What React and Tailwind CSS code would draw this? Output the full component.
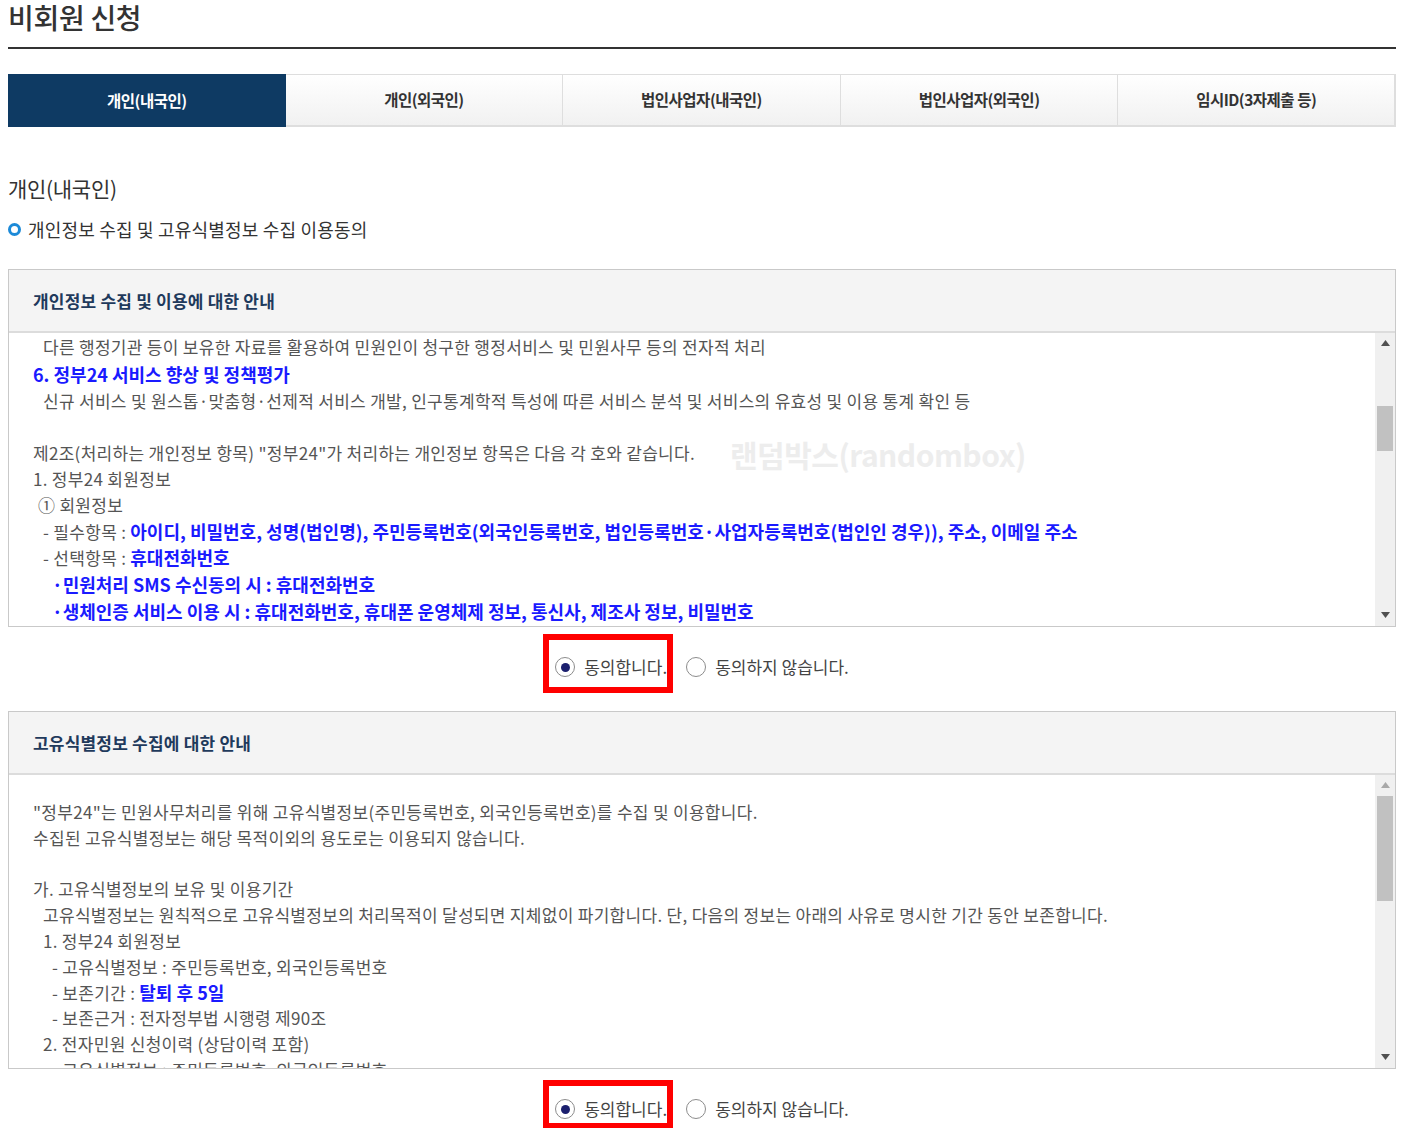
import React from "react";

const FONT = "font-['Noto_Sans_CJK_KR','Noto_Sans',sans-serif]";

function Radio({ checked }) {
  return (
    <span className="w-[20px] h-[20px] rounded-full border border-[#8c8c8c] bg-white flex items-center justify-center shrink-0">
      {checked && <span className="w-[9px] h-[9px] rounded-full bg-[#1b1f6e]" />}
    </span>
  );
}

function AgreeRow({ boxClass }) {
  return (
    <div className="h-[84px] flex justify-center items-start pt-[30px]">
      <div className="relative flex items-center gap-[9px] h-[20px]">
        <span className={"absolute border-[6px] border-[#ff0000] " + boxClass} />
        <Radio checked />
        <span className="text-[17px] leading-[20px] text-[#444]">동의합니다.</span>
      </div>
      <div className="flex items-center gap-[9px] h-[20px] ml-[19px]">
        <Radio />
        <span className="text-[17px] leading-[20px] text-[#444]">동의하지 않습니다.</span>
      </div>
    </div>
  );
}

function Arrow({ up, light }) {
  return (
    <svg width="9" height="6" viewBox="0 0 9 6">
      <polygon
        points={up ? "4.5,0 9,6 0,6" : "0,0 9,0 4.5,6"}
        fill={light ? "#a8a8a8" : "#505050"}
      />
    </svg>
  );
}

function Scrollbar({ thumbClass, upLight }) {
  return (
    <div className="w-[20px] shrink-0 bg-[#f0f0f0] flex flex-col items-center">
      <div className="h-[20px] w-full flex items-center justify-center">
        <Arrow up light={upLight} />
      </div>
      <div className={"w-[16px] bg-[#c1c1c1] " + thumbClass} />
      <div className="mt-auto h-[22px] w-full flex items-center justify-center">
        <Arrow />
      </div>
    </div>
  );
}

function Box({ title, children, scrollbar, overlay }) {
  return (
    <div className="border border-[#c9c9c9] h-[358px] flex flex-col">
      <div className="h-[63px] shrink-0 bg-[#f4f4f4] border-b-2 border-[#dcdcdc] flex items-center pl-[24px]">
        <span className="text-[17px] font-bold text-[#1f3a5c] tracking-[0.2px]">{title}</span>
      </div>
      <div className="flex-1 flex min-h-0">
        <div className="relative flex-1 overflow-hidden pl-[24px] text-[17px] tracking-[0.3px] text-[#555]">
          {children}
          {overlay}
        </div>
        {scrollbar}
      </div>
    </div>
  );
}

const B = ({ children }) => (
  <span className="text-[18px] font-bold text-[#1a1aff] tracking-[0px]">{children}</span>
);

export default function App() {
  return (
    <div className={"w-[1408px] h-[1128px] overflow-hidden bg-white " + FONT}>
      <div className="ml-[8px] w-[1388px]">
        <h1 className="h-[47px] pt-[0px] text-[28px] leading-[34px] font-medium text-[#333] tracking-[-0.3px]">
          비회원 신청
        </h1>
        <div className="h-[2px] bg-[#333]" />

        <div className="mt-[25px] grid grid-cols-5 h-[53px]">
          <div className="bg-[#0e3a63] flex items-center justify-center text-white text-[15.5px] font-bold tracking-[-0.5px]">
            개인(내국인)
          </div>
          {["개인(외국인)", "법인사업자(내국인)", "법인사업자(외국인)", "임시ID(3자제출 등)"].map((t, i) => (
            <div
              key={t}
              className={
                "flex items-center justify-center bg-gradient-to-b from-white to-[#f1f1f1] border-t border-b-2 border-[#dedede] text-[#333] text-[15.5px] font-semibold tracking-[-0.5px] " +
                (i < 3 ? "border-r" : "border-r-2")
              }
            >
              {t}
            </div>
          ))}
        </div>

        <div className="mt-[47px] text-[21px] leading-[28px] text-[#333] tracking-[-0.3px]">개인(내국인)</div>
        <div className="mt-[15px] flex items-center gap-[7px] h-[24px]">
          <span className="w-[13px] h-[13px] rounded-full border-[3px] border-[#1c8ad8]" />
          <span className="text-[18px] text-[#333] tracking-[0.2px]">개인정보 수집 및 고유식별정보 수집 이용동의</span>
        </div>

        <div className="mt-[28px]">
          <Box
            title="개인정보 수집 및 이용에 대한 안내"
            scrollbar={<Scrollbar thumbClass="mt-[53px] h-[45px]" />}
            overlay={
              <span className="absolute left-[721px] top-[103px] text-[30px] font-bold text-[#ededed] leading-[36px] tracking-[-0.5px]">
                랜덤박스(randombox)
              </span>
            }
          >
            <div className="pt-[1px]">
              <div className="h-[26px] leading-[26px] pl-[10px]">다른 행정기관 등이 보유한 자료를 활용하여 민원인이 청구한 행정서비스 및 민원사무 등의 전자적 처리</div>
              <div className="h-[28px] leading-[28px]"><B>6. 정부24 서비스 향상 및 정책평가</B></div>
              <div className="h-[26px] leading-[26px] pl-[10px]">신규 서비스 및 원스톱·맞춤형·선제적 서비스 개발, 인구통계학적 특성에 따른 서비스 분석 및 서비스의 유효성 및 이용 통계 확인 등</div>
              <div className="h-[26px]" />
              <div className="h-[26px] leading-[26px]">제2조(처리하는 개인정보 항목) "정부24"가 처리하는 개인정보 항목은 다음 각 호와 같습니다.</div>
              <div className="h-[26px] leading-[26px]">1. 정부24 회원정보</div>
              <div className="h-[26px] leading-[26px] pl-[5px]">① 회원정보</div>
              <div className="h-[26px] leading-[26px] pl-[10px]">- 필수항목 : <B>아이디, 비밀번호, 성명(법인명), 주민등록번호(외국인등록번호, 법인등록번호·사업자등록번호(법인인 경우)), 주소, 이메일 주소</B></div>
              <div className="h-[26px] leading-[26px] pl-[10px]">- 선택항목 : <B>휴대전화번호</B></div>
              <div className="h-[28px] leading-[28px] pl-[19px]"><B>·민원처리 SMS 수신동의 시 : 휴대전화번호</B></div>
              <div className="h-[26px] leading-[26px] pl-[19px]"><B>·생체인증 서비스 이용 시 : 휴대전화번호, 휴대폰 운영체제 정보, 통신사, 제조사 정보, 비밀번호</B></div>
            </div>
          </Box>
        </div>

        <AgreeRow boxClass="-left-[12px] -right-[6px] -top-[23px] -bottom-[16px]" />

        <Box
          title="고유식별정보 수집에 대한 안내"
          scrollbar={<Scrollbar thumbClass="mt-[1px] h-[105px]" upLight />}
        >
          <div className="pt-[24px]">
            <div className="h-[25.8px] leading-[25.8px]">"정부24"는 민원사무처리를 위해 고유식별정보(주민등록번호, 외국인등록번호)를 수집 및 이용합니다.</div>
            <div className="h-[25.8px] leading-[25.8px]">수집된 고유식별정보는 해당 목적이외의 용도로는 이용되지 않습니다.</div>
            <div className="h-[25.8px]" />
            <div className="h-[25.8px] leading-[25.8px]">가. 고유식별정보의 보유 및 이용기간</div>
            <div className="h-[25.8px] leading-[25.8px] pl-[10px]">고유식별정보는 원칙적으로 고유식별정보의 처리목적이 달성되면 지체없이 파기합니다. 단, 다음의 정보는 아래의 사유로 명시한 기간 동안 보존합니다.</div>
            <div className="h-[25.8px] leading-[25.8px] pl-[10px]">1. 정부24 회원정보</div>
            <div className="h-[25.8px] leading-[25.8px] pl-[19px]">- 고유식별정보 : 주민등록번호, 외국인등록번호</div>
            <div className="h-[25.8px] leading-[25.8px] pl-[19px]">- 보존기간 : <B>탈퇴 후 5일</B></div>
            <div className="h-[25.8px] leading-[25.8px] pl-[19px]">- 보존근거 : 전자정부법 시행령 제90조</div>
            <div className="h-[25.8px] leading-[25.8px] pl-[10px]">2. 전자민원 신청이력 (상담이력 포함)</div>
            <div className="h-[25.8px] leading-[25.8px] pl-[19px]">- 고유식별정보 : 주민등록번호, 외국인등록번호</div>
          </div>
        </Box>

        <AgreeRow boxClass="-left-[12px] -right-[6px] -top-[19px] -bottom-[10px]" />
      </div>
    </div>
  );
}
